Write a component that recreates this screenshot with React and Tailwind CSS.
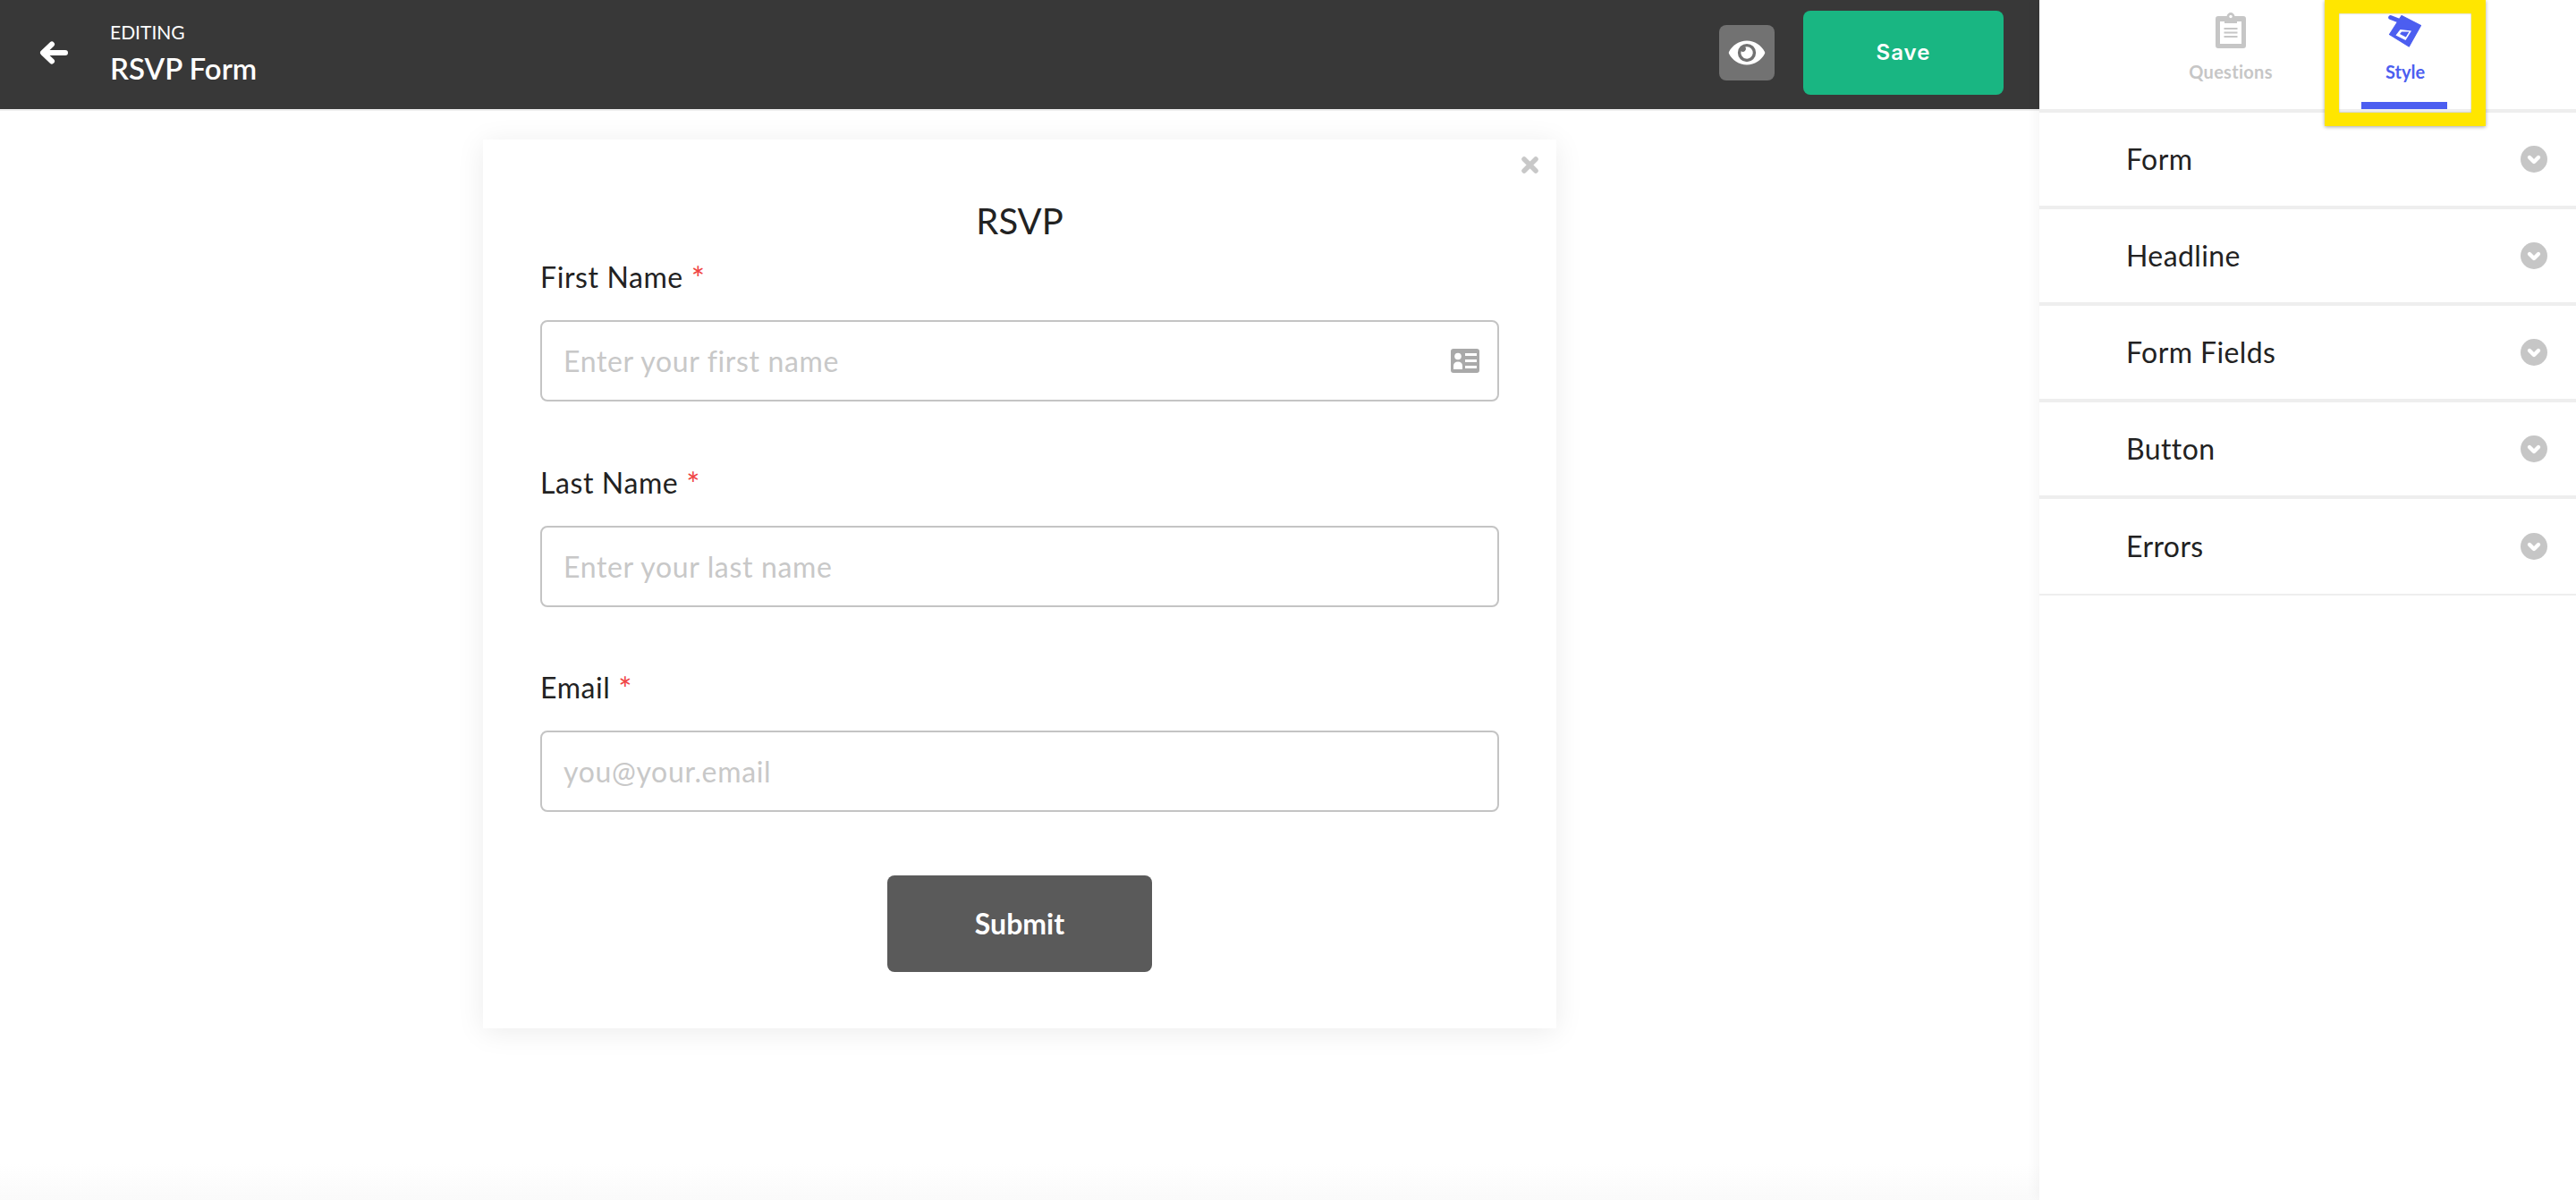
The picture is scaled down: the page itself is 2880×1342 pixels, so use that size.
import { FaEye } from "react-icons/fa";

function ChevronDot() {
  return (
    <svg viewBox="0 0 30 30" className="w-[30px] h-[30px]">
      <circle cx="15" cy="15" r="15" fill="#c6c6c6" />
      <path d="M10 13 L15 18 L20 13" fill="none" stroke="#fff" strokeWidth="4.4" strokeLinecap="round" strokeLinejoin="round" />
    </svg>
  );
}

function ClipboardIcon() {
  return (
    <svg viewBox="0 0 34 40" className="w-[34px] h-[40px]">
      <path fill="#c6c6c6" d="M3 4h9.500C13 1.700 14.800 0 17 0s4 1.700 4.500 4H31a3 3 0 0 1 3 3v30a3 3 0 0 1-3 3H3a3 3 0 0 1-3-3V7a3 3 0 0 1 3-3z" />
      <circle cx="17" cy="4.500" r="1.700" fill="#fff" />
      <path fill="#fff" d="M5 10h5v2h14v-2h5v25H5z" />
      <rect x="9.500" y="17" width="15" height="2" fill="#c6c6c6" />
      <rect x="9.500" y="21.500" width="15" height="2" fill="#c6c6c6" />
      <rect x="9.500" y="26" width="15" height="2" fill="#c6c6c6" />
    </svg>
  );
}

function BucketIcon() {
  return (
    <svg viewBox="10 5 38 38" className="w-[38px] h-[38px]">
      <path d="M12.700 9.500 L23 13.500" stroke="#4c5ef0" strokeWidth="5" strokeLinecap="round" />
      <path d="M25 7.500 L46.500 18.500 L33.300 42 L11.500 28.500Z" fill="#4c5ef0" stroke="#4c5ef0" strokeWidth="1.200" strokeLinejoin="round" />
      <path d="M23.500 23 L36 24.500 L29.500 35 L18.500 29.500Z" fill="#fff" />
      <path d="M25 25.500 L33.500 25.500 L29.800 31.500 L23 28Z" fill="#4c5ef0" />
    </svg>
  );
}

function CardIcon() {
  return (
    <svg viewBox="0 0 32 27" className="w-[32px] h-[27px]">
      <rect width="32" height="27" rx="3" fill="#a9a9a9" />
      <circle cx="8" cy="8.500" r="3.800" fill="#fff" />
      <path d="M3 23v-4c0-3 2-4.500 5-4.500s5 1.500 5 4.500v4z" fill="#fff" />
      <rect x="16" y="5" width="13" height="3" fill="#fff" />
      <rect x="16" y="12" width="13" height="3" fill="#fff" />
      <rect x="16" y="19" width="13" height="3" fill="#fff" />
    </svg>
  );
}

function BackArrow() {
  return (
    <svg viewBox="0 0 32 26" className="w-[32px] h-[26px]">
      <path d="M29 13 H5 M14 3.500 L4 13 L14 22.500" fill="none" stroke="#fff" strokeWidth="6" strokeLinecap="round" strokeLinejoin="round" />
    </svg>
  );
}

function CloseIcon() {
  return (
    <svg viewBox="0 0 19 19" className="w-[19px] h-[19px]">
      <path d="M3 3 L16 16 M16 3 L3 16" stroke="#c8c8c8" strokeWidth="5.500" strokeLinecap="round" />
    </svg>
  );
}

function Field({ label, placeholder, icon }) {
  return (
    <div className="h-[229.5px] shrink-0">
      <label className="block h-[68px] text-[32px] leading-[40px] tracking-[0.6px] text-[#222]">
        {label} <span className="relative top-[3px] align-top text-[36px] leading-[36px] text-[#f04444]">*</span>
      </label>
      <div className="relative">
        <input
          readOnly
          placeholder={placeholder}
          className="block h-[91px] w-full rounded-[8px] border-2 border-[#c4c4c4] bg-white px-[24px] text-[32px] tracking-[0.65px] outline-none placeholder:text-[#c8c8c8]"
        />
        {icon && <div className="absolute right-[22px] top-[32px]">{icon}</div>}
      </div>
    </div>
  );
}

function Row({ title, last }) {
  return (
    <div className={`flex h-[108px] items-center justify-between border-b-[#eeeeee] pl-[97px] pr-[32px] ${last ? "border-b-2" : "border-b-4"}`}>
      <span className="text-[32px] tracking-[0.4px] text-[#222]">{title}</span>
      <ChevronDot />
    </div>
  );
}

export default function App() {
  return (
    <div className="flex h-[1342px] overflow-hidden bg-white font-['Lato',sans-serif]">
      <div className="flex w-[2280px] shrink-0 flex-col bg-gradient-to-b from-white from-[97%] to-[#fafafa]">
        <header className="flex h-[124px] shrink-0 items-center border-b-2 border-[#eeeeee] bg-[#383838] pb-[4px] pl-[44px] pr-[40px] text-white">
          <BackArrow />
          <div className="ml-[47px] flex flex-col">
            <span className="text-[21px] leading-[26px]">EDITING</span>
            <span className="mt-[8px] text-[33px] font-semibold leading-[38px]">RSVP Form</span>
          </div>
          <div className="ml-auto flex h-[62px] w-[62px] items-center justify-center rounded-[8px] bg-[#727272]">
            <FaEye className="h-[36px] w-[42px]" />
          </div>
          <button className="ml-[32px] h-[94px] w-[224px] rounded-[8px] bg-[#19b682] font-['Inter',sans-serif] text-[24px] font-semibold tracking-[1px] text-white">
            Save
          </button>
        </header>
        <main className="flex-1 pt-[32px]">
          <div className="relative mx-auto flex h-[994px] w-[1200px] flex-col bg-white px-[64px] shadow-[0_4px_30px_rgba(0,0,0,0.08)]">
            <div className="absolute right-[20px] top-[19px]">
              <CloseIcon />
            </div>
            <h1 className="mt-[66px] text-center text-[40px] leading-[50px] text-[#222]">RSVP</h1>
            <div className="mt-[18px]">
              <Field label="First Name" placeholder="Enter your first name" icon={<CardIcon />} />
              <Field label="Last Name" placeholder="Enter your last name" />
              <Field label="Email" placeholder="you@your.email" />
            </div>
            <button className="mx-auto h-[108px] w-[296px] rounded-[8px] bg-[#5a5a5a] text-[32px] font-bold text-white">
              Submit
            </button>
          </div>
        </main>
      </div>
      <aside className="relative flex-1 bg-white shadow-[-4px_0_12px_rgba(0,0,0,0.04)]">
        <div className="flex h-[126px] border-b-4 border-[#eeeeee]">
          <div className="ml-[131px] flex w-[166px] flex-col items-center pt-[14px]">
            <ClipboardIcon />
            <span className="mt-[13px] text-[20px] font-bold leading-[26px] tracking-[0.3px] text-[#c6c6c6]">Questions</span>
          </div>
          <div className="relative ml-[22px] flex w-[180px] flex-col items-center pt-[15px]">
            <BucketIcon />
            <span className="mt-[14px] text-[20px] font-bold leading-[26px] text-[#4c5ef0]">Style</span>
            <div className="absolute bottom-0 left-[41px] h-[8px] w-[96px] bg-[#4c5ef0]" />
            <div className="pointer-events-none absolute left-0 top-0 h-[141px] w-[180px] border-x-[16px] border-y-[15px] border-[#ffe600] shadow-[0_1px_4px_rgba(0,0,0,0.35),inset_0_0_2px_rgba(0,0,0,0.35)]" />
          </div>
        </div>
        <Row title="Form" />
        <Row title="Headline" />
        <Row title="Form Fields" />
        <Row title="Button" />
        <Row title="Errors" last />
      </aside>
    </div>
  );
}
